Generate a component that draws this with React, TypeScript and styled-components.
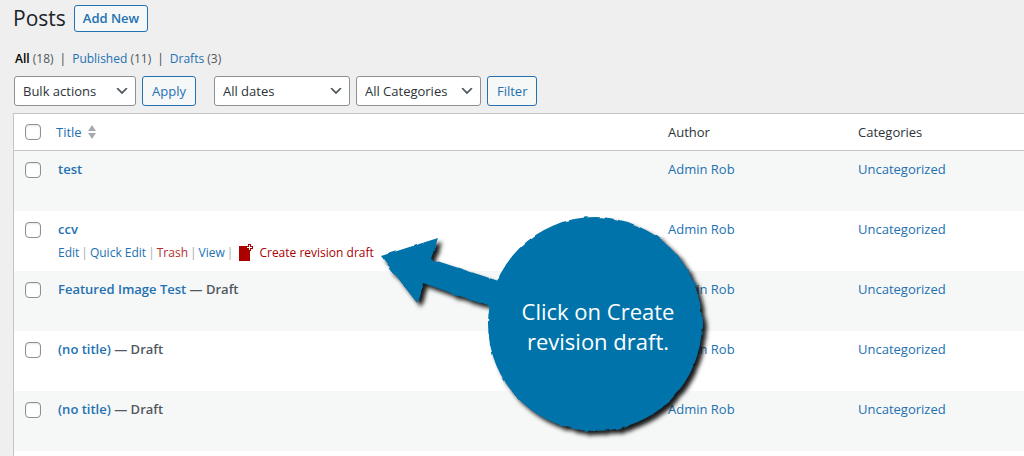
import React from "react";
import styled, { createGlobalStyle, css } from "styled-components";

const blue = "#2271b1";

const GlobalStyle = createGlobalStyle`
  *, *::before, *::after { box-sizing: border-box; }
  body {
    margin: 0;
    background: #efefef;
    color: #3c434a;
    font-family: "Open Sans", "Noto Sans", sans-serif;
    font-size: 13px;
    line-height: 20px;
  }
`;

const Page = styled.main`
  position: relative;
  display: flex;
  flex-direction: column;
  height: 100vh;
  padding-left: 13px;
  overflow: hidden;
`;

const Heading = styled.header`
  display: flex;
  align-items: center;
  gap: 8px;
  padding-top: 4px;
`;

const PageTitle = styled.h1`
  margin: 0;
  color: #1d2327;
  font-size: 21px;
  font-weight: 400;
  line-height: 28px;
`;

const Button = styled.button<{ $strong?: boolean }>`
  height: ${(p) => (p.$strong ? 27 : 30)}px;
  padding: 0 ${(p) => (p.$strong ? 8 : 9)}px;
  border: 1px solid ${blue};
  border-radius: 3px;
  background: #f6f7f7;
  color: ${blue};
  font-family: inherit;
  font-size: 13px;
  font-weight: ${(p) => (p.$strong ? 600 : 400)};
  cursor: pointer;
`;

const Link = styled.a<{ $danger?: boolean }>`
  color: ${(p) => (p.$danger ? "#b32d2e" : blue)};
  text-decoration: none;
`;

const Views = styled.nav`
  display: flex;
  gap: 6px;
  padding: 17px 0 0 2px;
  font-size: 12px;
`;

const ViewLink = styled(Link)<{ $current?: boolean }>`
  ${(p) => p.$current && css`color: #000; font-weight: 600;`}
`;

const Count = styled.span`
  color: #50575e;
  font-size: 12px;
  font-weight: 400;
`;

const Filters = styled.form`
  display: flex;
  gap: 7px;
  padding: 7px 0 7px 1px;
`;

const FilterGroup = styled.div`
  display: flex;
  gap: 6px;
  & + & { margin-left: 11px; }
`;

const SelectBox = styled.div<{ $width: number }>`
  display: grid;
  align-items: center;
  width: ${(p) => p.$width}px;
  & > * { grid-area: 1 / 1; }
  & > svg { justify-self: end; margin-right: 6px; pointer-events: none; }
`;

const Select = styled.select`
  width: 100%;
  height: 30px;
  padding: 0 24px 0 8px;
  border: 1px solid #8c8f94;
  border-radius: 3px;
  appearance: none;
  background: #fff;
  color: #2c3338;
  font-family: inherit;
  font-size: 13px;
`;

const TableFrame = styled.section`
  flex: 1;
  border: solid #c3c4c7;
  border-width: 1px 0 0 1px;
  background: #fff;
`;

const Table = styled.table`
  width: 100%;
  border-spacing: 0;
  table-layout: fixed;
`;

const CheckCol = styled.col`width: 34px;`;
const AuthorCol = styled.col`width: 190px;`;
const CategoryCol = styled.col`width: 174px;`;

const HeadCell = styled.th`
  height: 37px;
  padding: 0 8px;
  border-bottom: 1px solid #c3c4c7;
  color: #2c3338;
  font-weight: 400;
  text-align: left;
`;

const SortLink = styled(Link)`
  display: flex;
  align-items: center;
  gap: 6px;
`;

const Row = styled.tr`
  height: 60px;
  &:nth-child(odd) { background: #f6f7f7; }
`;

const Cell = styled.td`
  padding: 8px 8px;
  vertical-align: top;
`;

const TitleCell = styled(Cell)`padding-left: 10px;`;

const CheckCell = styled(Cell)`padding: 11px 0 0 11px;`;
const CheckHead = styled(HeadCell)`padding: 0 0 0 11px;`;

const Checkbox = styled.input`
  display: block;
  width: 16px;
  height: 16px;
  margin: 0;
  border: 1px solid #8c8f94;
  border-radius: 4px;
  appearance: none;
  background: #fff;
  box-shadow: inset 0 1px 2px rgba(0, 0, 0, 0.1);
`;

const PostTitle = styled.strong`
  display: block;
  color: #50575e;
  font-weight: 600;
`;

const Actions = styled.div`
  display: flex;
  gap: 2px;
  padding-top: 4px;
  color: #a7aaad;
  font-size: 12px;
  white-space: nowrap;
`;

const RevisionLink = styled(Link)`
  display: flex;
  align-items: center;
  gap: 5px;
  margin-left: 3px;
  color: #a00;
`;

const Callout = styled.aside`
  position: absolute;
  top: 208px;
  left: 374px;
  display: grid;
  width: 344px;
  height: 240px;
  pointer-events: none;
  & > * { grid-area: 1 / 1; }
`;

const CalloutText = styled.p`
  z-index: 1;
  margin: 88px 12px 0 116px;
  color: #fff;
  font-size: 22px;
  line-height: 30px;
  text-align: center;
`;

const Chevron = () => (
  <svg width="16" height="16" viewBox="0 0 20 20" aria-hidden="true">
    <path d="M5 6l5 5 5-5 2 1-7 7-7-7 2-1z" fill="#50575e" />
  </svg>
);

const SortArrows = () => (
  <svg width="8" height="16" viewBox="0 0 8 16" aria-hidden="true">
    <path d="M4 1l4 6H0zM4 15L0 9h8z" fill="#a7aaad" />
  </svg>
);

const RevisionIcon = () => (
  <svg width="16" height="18" viewBox="0 0 16 18" aria-hidden="true">
    <path d="M1 2h11v15H1z" fill="#a00" />
    <path d="M10 0h3v2h2v3h-2v2h-3V5H8V2h2z" fill="#a00" />
    <path d="M11 1h1v2h2v1h-2v2h-1V4H9V3h2z" fill="#fff" />
  </svg>
);

const CalloutShape = () => (
  <svg width="344" height="240" viewBox="0 0 344 240" aria-hidden="true">
    <defs>
      <filter id="callout-edge" x="0" y="0" width="344" height="240" filterUnits="userSpaceOnUse" colorInterpolationFilters="sRGB">
        <feTurbulence type="fractalNoise" baseFrequency="0.12" numOctaves="1" seed="4" result="noise" />
        <feDisplacementMap in="SourceGraphic" in2="noise" scale="3" xChannelSelector="R" yChannelSelector="G" result="rough" />
        <feGaussianBlur in="rough" stdDeviation="0.4" result="soft" />
        <feDropShadow in="soft" dx="4" dy="4" stdDeviation="2" floodColor="#000" floodOpacity="0.9" />
      </filter>
    </defs>
    <g fill="#0073aa" filter="url(#callout-edge)">
      <path d="M7 48L64 30 57 51 140 78 128 103 49 75 43 95z" />
      <circle cx="221" cy="116" r="107" />
    </g>
  </svg>
);

const Dropdown = ({ label, width, name }: { label: string; width: number; name: string }) => (
  <SelectBox $width={width}>
    <Select aria-label={name} defaultValue={label}>
      <option>{label}</option>
    </Select>
    <Chevron />
  </SelectBox>
);

const posts = [
  { id: 1, title: "test" },
  { id: 2, title: "ccv", actions: true },
  { id: 3, title: "Featured Image Test", draft: true },
  { id: 4, title: "(no title)", draft: true },
  { id: 5, title: "(no title)", draft: true },
];

const RowActions = () => (
  <Actions>
    <Link href="#edit">Edit</Link>|
    <Link href="#quick-edit">Quick Edit</Link>|
    <Link href="#trash" $danger>Trash</Link>|
    <Link href="#view">View</Link>|
    <RevisionLink href="#revision"><RevisionIcon />Create revision draft</RevisionLink>
  </Actions>
);

export default function App() {
  return (
    <>
      <GlobalStyle />
      <Page>
        <Heading>
          <PageTitle>Posts</PageTitle>
          <Button type="button" $strong>Add New</Button>
        </Heading>
        <Views aria-label="Post status">
          <ViewLink href="#all" $current>All <Count>(18)</Count></ViewLink>
          <span>|</span>
          <ViewLink href="#published">Published <Count>(11)</Count></ViewLink>
          <span>|</span>
          <ViewLink href="#drafts">Drafts <Count>(3)</Count></ViewLink>
        </Views>
        <Filters>
          <FilterGroup>
            <Dropdown name="Bulk actions" label="Bulk actions" width={122} />
            <Button type="button">Apply</Button>
          </FilterGroup>
          <FilterGroup>
            <Dropdown name="Date" label="All dates" width={136} />
            <Dropdown name="Category" label="All Categories" width={125} />
            <Button type="button">Filter</Button>
          </FilterGroup>
        </Filters>
        <TableFrame>
          <Table>
            <colgroup>
              <CheckCol />
              <col />
              <AuthorCol />
              <CategoryCol />
            </colgroup>
            <thead>
              <tr>
                <CheckHead><Checkbox type="checkbox" aria-label="Select all" /></CheckHead>
                <HeadCell><SortLink href="#sort">Title<SortArrows /></SortLink></HeadCell>
                <HeadCell>Author</HeadCell>
                <HeadCell>Categories</HeadCell>
              </tr>
            </thead>
            <tbody>
              {posts.map((post) => (
                <Row key={post.id}>
                  <CheckCell><Checkbox type="checkbox" aria-label={`Select ${post.title}`} /></CheckCell>
                  <TitleCell>
                    <PostTitle>
                      <Link href="#post">{post.title}</Link>
                      {post.draft && " — Draft"}
                    </PostTitle>
                    {post.actions && <RowActions />}
                  </TitleCell>
                  <Cell><Link href="#author">Admin Rob</Link></Cell>
                  <Cell><Link href="#category">Uncategorized</Link></Cell>
                </Row>
              ))}
            </tbody>
          </Table>
        </TableFrame>
        <Callout>
          <CalloutShape />
          <CalloutText>Click on Create<br />revision draft.</CalloutText>
        </Callout>
      </Page>
    </>
  );
}
